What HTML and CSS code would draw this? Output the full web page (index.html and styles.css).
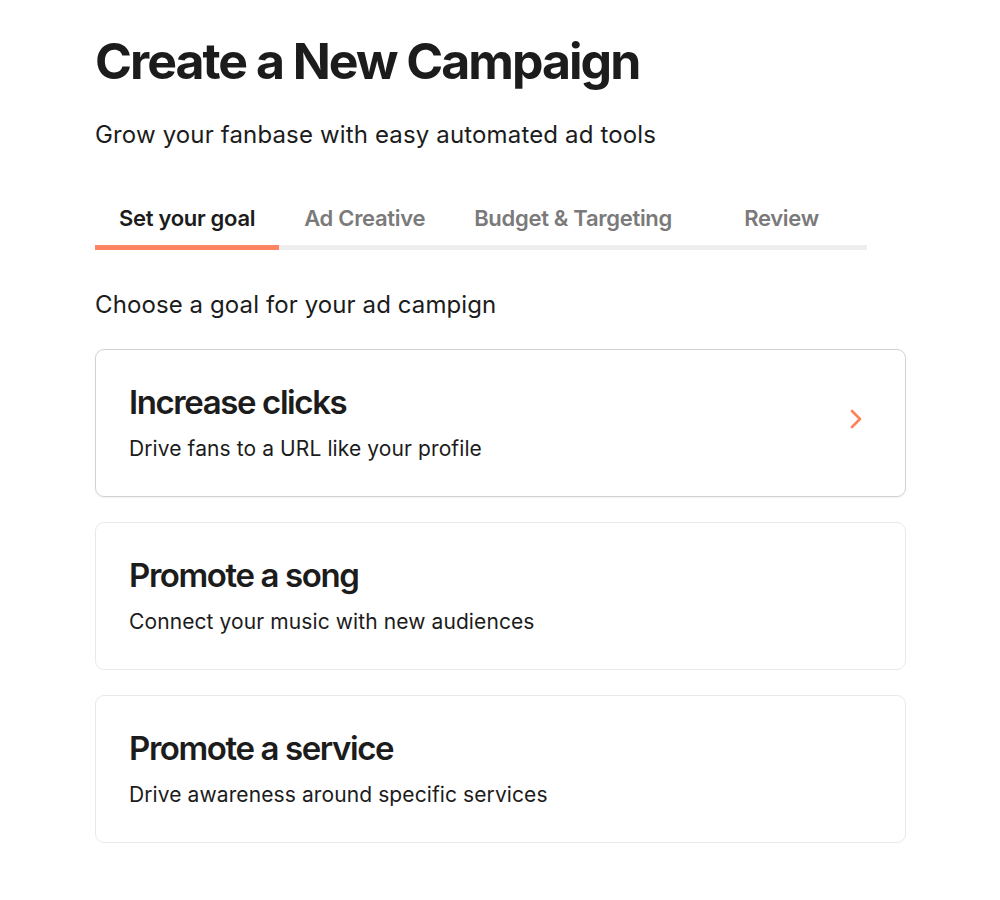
FILE: index.html
```html
<!DOCTYPE html>
<html lang="en">
<head>
<meta charset="utf-8">
<title>Create a New Campaign</title>
<link rel="stylesheet" href="styles.css">
</head>
<body>
<main class="page">
  <h1 class="title">Create a New Campaign</h1>
  <p class="subtitle">Grow your fanbase with easy automated ad tools</p>
  <nav class="tabs">
    <div class="tab active">Set your goal</div>
    <div class="tab">Ad Creative</div>
    <div class="tab">Budget &amp; Targeting</div>
    <div class="tab">Review</div>
  </nav>
  <p class="prompt">Choose a goal for your ad campign</p>
  <div class="cards">
    <div class="card selected">
      <div class="card-text">
        <h2 class="card-title">Increase clicks</h2>
        <p class="card-desc">Drive fans to a URL like your profile</p>
      </div>
      <svg class="chevron" width="14" height="24" viewBox="0 0 14 24"><path d="M3 4 L11 12 L3 20" fill="none" stroke="#ff8159" stroke-width="2.6" stroke-linecap="round" stroke-linejoin="round"/></svg>
    </div>
    <div class="card">
      <div class="card-text">
        <h2 class="card-title">Promote a song</h2>
        <p class="card-desc">Connect your music with new audiences</p>
      </div>
    </div>
    <div class="card">
      <div class="card-text">
        <h2 class="card-title">Promote a service</h2>
        <p class="card-desc">Drive awareness around specific services</p>
      </div>
    </div>
  </div>
</main>
</body>
</html>
```

FILE: styles.css
```css
* { box-sizing: border-box; }
html, body { margin: 0; padding: 0; background: #fff; }
body {
  font-family: Inter, "Noto Sans", sans-serif;
  color: #1c1c1c;
}
.page {
  padding: 30px 95px 0 95px;
  width: 1000px;
}
.title {
  margin: 0;
  font-size: 50px;
  font-weight: 700;
  letter-spacing: -2px;
  line-height: 62px;
}
.subtitle {
  margin: 28px 0 0 0;
  font-size: 24px;
  font-weight: 400;
  line-height: 30px;
  letter-spacing: 0.15px;
}
.tabs {
  margin-top: 54px;
  display: flex;
  width: 772px;
  border-bottom: 5px solid #eeeeee;
}
.tab {
  padding: 0 24px 13px 24px;
  min-width: 171px;
  text-align: center;
  font-size: 22px;
  font-weight: 600;
  color: #7a7a7a;
  line-height: 28px;
  margin-bottom: -5px;
  border-bottom: 5px solid transparent;
  letter-spacing: -0.3px;
}
.tab.active {
  color: #1c1c1c;
  border-bottom-color: #ff8562;
}
.prompt {
  margin: 40px 0 0 0;
  font-size: 24px;
  line-height: 30px;
  letter-spacing: 0.1px;
}
.cards {
  margin-top: 29px;
  display: flex;
  flex-direction: column;
  gap: 25px;
  width: 811px;
}
.card {
  height: 148px;
  border: 1px solid #e9e9e9;
  border-radius: 9px;
  padding: 0 42px 2px 33px;
  display: flex;
  align-items: center;
  justify-content: space-between;
}
.card.selected {
  border-color: #d2d2d2;
  box-shadow: 0 1px 2px rgba(0,0,0,0.06);
}
.card-title {
  margin: 0;
  font-size: 33px;
  font-weight: 600;
  letter-spacing: -1.4px;
  line-height: 38px;
}
.card-desc {
  margin: 15px 0 0 0;
  font-size: 21px;
  line-height: 26px;
  letter-spacing: 0.1px;
}
.chevron { display: block; margin-bottom: 6px; }
```
